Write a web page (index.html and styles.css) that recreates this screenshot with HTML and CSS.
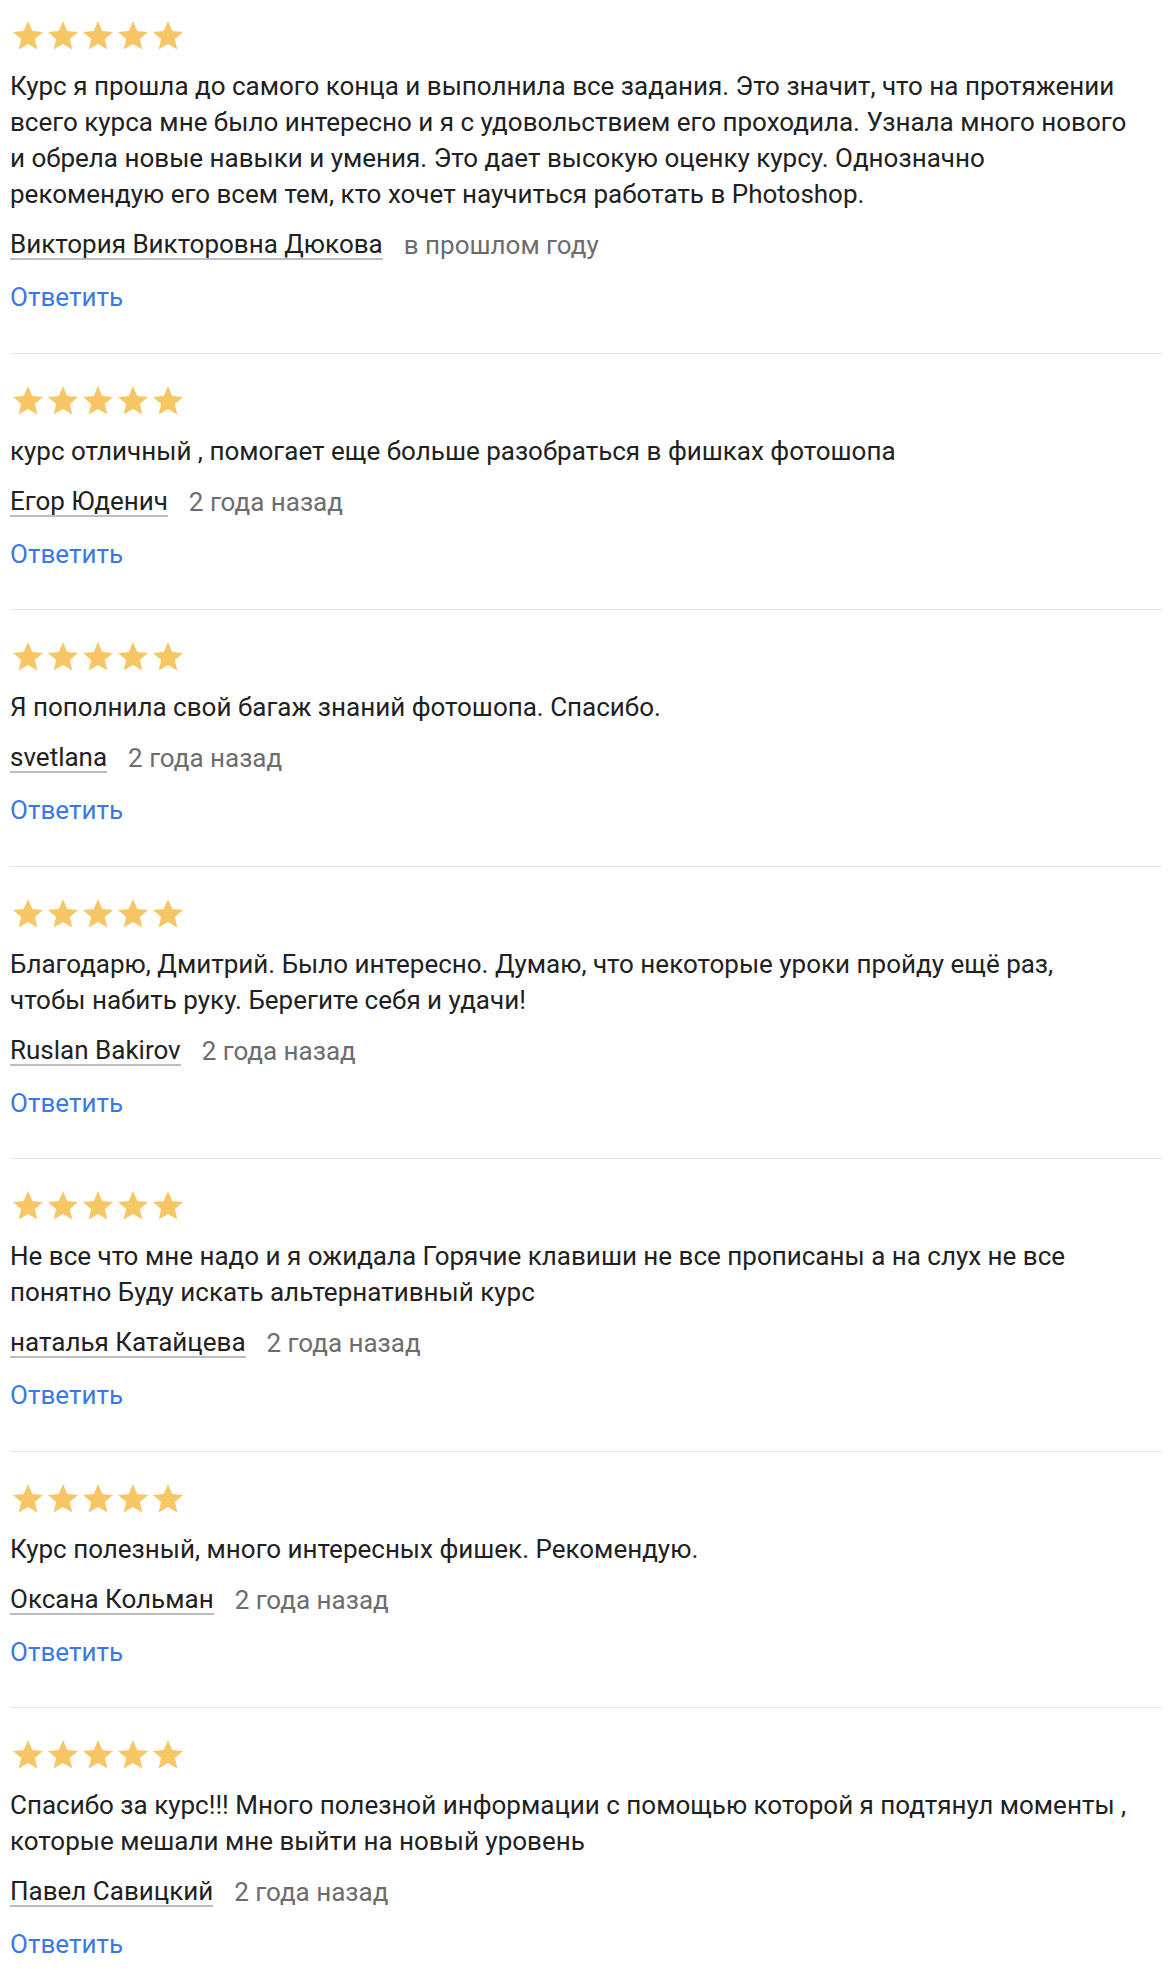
FILE: index.html
```html
<!DOCTYPE html>
<html lang="ru">
<head>
<meta charset="utf-8">
<link rel="stylesheet" href="styles.css">
<title>Отзывы</title>
</head>
<body>
<svg width="0" height="0" class="defs" aria-hidden="true">
  <defs>
    <symbol id="star" viewBox="0 0 24 24">
      <path d="M12 0.8l3.2 7.45 8.1.7-6.15 5.33 1.84 7.92L12 18.01 5.01 22.2l1.84-7.92L.7 8.95l8.1-.7z"/>
    </symbol>
  </defs>
</svg>
<div class="reviews">
  <div class="review">
    <div class="stars"><svg><use href="#star"/></svg><svg><use href="#star"/></svg><svg><use href="#star"/></svg><svg><use href="#star"/></svg><svg><use href="#star"/></svg></div>
    <p class="text">Курс я прошла до самого конца и выполнила все задания. Это значит, что на протяжении всего курса мне было интересно и я с удовольствием его проходила. Узнала много нового и обрела новые навыки и умения. Это дает высокую оценку курсу. Однозначно рекомендую его всем тем, кто хочет научиться работать в Photoshop.</p>
    <div class="meta"><span class="author">Виктория Викторовна Дюкова</span><span class="date">в прошлом году</span></div>
    <a class="reply" href="#">Ответить</a>
  </div>
  <div class="review">
    <div class="stars"><svg><use href="#star"/></svg><svg><use href="#star"/></svg><svg><use href="#star"/></svg><svg><use href="#star"/></svg><svg><use href="#star"/></svg></div>
    <p class="text">курс отличный , помогает еще больше разобраться в фишках фотошопа</p>
    <div class="meta"><span class="author">Егор Юденич</span><span class="date">2 года назад</span></div>
    <a class="reply" href="#">Ответить</a>
  </div>
  <div class="review">
    <div class="stars"><svg><use href="#star"/></svg><svg><use href="#star"/></svg><svg><use href="#star"/></svg><svg><use href="#star"/></svg><svg><use href="#star"/></svg></div>
    <p class="text">Я пополнила свой багаж знаний фотошопа. Спасибо.</p>
    <div class="meta"><span class="author">svetlana</span><span class="date">2 года назад</span></div>
    <a class="reply" href="#">Ответить</a>
  </div>
  <div class="review">
    <div class="stars"><svg><use href="#star"/></svg><svg><use href="#star"/></svg><svg><use href="#star"/></svg><svg><use href="#star"/></svg><svg><use href="#star"/></svg></div>
    <p class="text">Благодарю, Дмитрий. Было интересно. Думаю, что некоторые уроки пройду ещё раз, чтобы набить руку. Берегите себя и удачи!</p>
    <div class="meta"><span class="author">Ruslan Bakirov</span><span class="date">2 года назад</span></div>
    <a class="reply" href="#">Ответить</a>
  </div>
  <div class="review">
    <div class="stars"><svg><use href="#star"/></svg><svg><use href="#star"/></svg><svg><use href="#star"/></svg><svg><use href="#star"/></svg><svg><use href="#star"/></svg></div>
    <p class="text">Не все что мне надо и я ожидала Горячие клавиши не все прописаны а на слух не все понятно Буду искать альтернативный курс</p>
    <div class="meta"><span class="author">наталья Катайцева</span><span class="date">2 года назад</span></div>
    <a class="reply" href="#">Ответить</a>
  </div>
  <div class="review">
    <div class="stars"><svg><use href="#star"/></svg><svg><use href="#star"/></svg><svg><use href="#star"/></svg><svg><use href="#star"/></svg><svg><use href="#star"/></svg></div>
    <p class="text">Курс полезный, много интересных фишек. Рекомендую.</p>
    <div class="meta"><span class="author">Оксана Кольман</span><span class="date">2 года назад</span></div>
    <a class="reply" href="#">Ответить</a>
  </div>
  <div class="review">
    <div class="stars"><svg><use href="#star"/></svg><svg><use href="#star"/></svg><svg><use href="#star"/></svg><svg><use href="#star"/></svg><svg><use href="#star"/></svg></div>
    <p class="text">Спасибо за курс!!! Много полезной информации с помощью которой я подтянул моменты , которые мешали мне выйти на новый уровень</p>
    <div class="meta"><span class="author">Павел Савицкий</span><span class="date">2 года назад</span></div>
    <a class="reply" href="#">Ответить</a>
  </div>
</div>
</body>
</html>
```

FILE: styles.css
```css
html, body {
  margin: 0;
  padding: 0;
  background: #ffffff;
}

body {
  font-family: Roboto, "Noto Sans", sans-serif;
  color: #212121;
  font-size: 26px;
  line-height: 36px;
}

.defs {
  position: absolute;
  width: 0;
  height: 0;
}

.reviews {
  padding: 0 14px 0 10px;
}

.review {
  display: flex;
  flex-direction: column;
  align-items: flex-start;
  padding: 32px 0 37.5px;
  border-bottom: 1px solid #e6e6f0;
}

.review:first-child {
  padding-top: 21px;
}

.review:last-child {
  border-bottom: none;
}

.stars {
  display: flex;
  gap: 3px;
  height: 30px;
  align-items: center;
  padding-left: 2px;
}

.stars svg {
  width: 32px;
  height: 32px;
  fill: #f8c765;
}

.text {
  margin: 17px 0 0;
  max-width: 1120px;
}

.meta {
  display: flex;
  align-items: center;
  gap: 21px;
  margin-top: 15px;
  height: 36px;
}

.author {
  color: #212121;
  line-height: 28px;
  border-bottom: 2px solid #bdbdbd;
}

.date {
  color: #6d6d6d;
}

.reply {
  margin-top: 16px;
  color: #3b78e7;
  text-decoration: none;
}
```
